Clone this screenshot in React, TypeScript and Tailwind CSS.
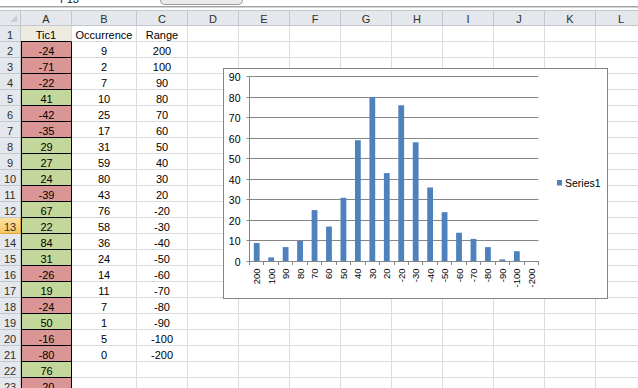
import React from 'react';

const COLS = ['A', 'B', 'C', 'D', 'E', 'F', 'G', 'H', 'I', 'J', 'K', 'L'];
const TIC = [-24, -71, -22, 41, -42, -35, 29, 27, 24, -39, 67, 22, 84, 31, -26, 19, -24, 50, -16, -80, 76, -20];
const OCC = [9, 2, 7, 10, 25, 17, 31, 59, 80, 43, 76, 58, 36, 24, 14, 11, 7, 1, 5, 0];
const RNG = [200, 100, 90, 80, 70, 60, 50, 40, 30, 20, -20, -30, -40, -50, -60, -70, -80, -90, -100, -200];

const grid = 'border-r border-b border-[#dadcdd]';
const head = 'flex items-end justify-center leading-[12px] text-[#2e2e2e]';

function Chart() {
  const left = 25.5;
  const right = 314.5;
  const base = 192.5;
  const unit = (192.5 - 7.5) / 90;
  const cw = (right - left) / RNG.length;
  const yAt = (v: number) => base - v * unit;

  return (
    <div className="absolute left-[223px] top-[68px] w-[385px] h-[231px] border border-[#868686] bg-white">
      <svg width="383" height="229" className="block font-['Liberation_Sans',Arial,sans-serif]">
        {[0, 10, 20, 30, 40, 50, 60, 70, 80, 90].map((v) => {
          const y = Math.round(yAt(v) - 0.5) + 0.5;
          return (
            <g key={v}>
              <line x1={left} x2={right} y1={y} y2={y} stroke="#868686" />
              <line x1={left - 3} x2={left} y1={y} y2={y} stroke="#868686" />
              <text x="16.5" y={y} textAnchor="end" dominantBaseline="central" fontSize="10.5" fill="#000">
                {v}
              </text>
            </g>
          );
        })}
        <line x1={left} x2={left} y1={7.5} y2={base} stroke="#868686" />
        {OCC.map((v, i) => {
          const cx = left + (i + 0.5) * cw;
          return (
            <rect key={i} x={cx - 2.9} y={yAt(v)} width="5.8" height={base - yAt(v)} fill="#4f81bd" />
          );
        })}
        <line x1={left} x2={right} y1={base} y2={base} stroke="#868686" />
        {RNG.map((_, i) => {
          const x = Math.round(left + i * cw - 0.5) + 0.5;
          return <line key={i} x1={x} x2={x} y1={base} y2={base + 3.5} stroke="#868686" />;
        })}
        <line x1={right} x2={right} y1={base} y2={base + 3.5} stroke="#868686" />
        {RNG.map((r, i) => {
          const cx = left + (i + 0.5) * cw;
          return (
            <text
              key={r}
              x={cx}
              y="199.5"
              transform={`rotate(-90 ${cx} 199.5)`}
              textAnchor="end"
              dominantBaseline="central"
              fontSize="9.5"
              fill="#000"
            >
              {r}
            </text>
          );
        })}
        <rect x="333" y="111" width="5" height="5.5" fill="#4f81bd" />
        <text x="341" y="113.8" dominantBaseline="central" fontSize="10.5" fill="#000">
          Series1
        </text>
      </svg>
    </div>
  );
}

export default function App() {
  const rows = Array.from({ length: 23 }, (_, i) => i + 1);

  return (
    <div className="relative w-[638px] h-[388px] overflow-hidden bg-white font-['Liberation_Sans',Arial,sans-serif] text-[11px] text-black">
      <div className="flex h-[6px] overflow-hidden items-start">
        <div className="w-[160px] pl-[60px]">
          <span className="block -mt-[7px] leading-[12px] text-[#222]">F13</span>
        </div>
        <div className="w-[83px] h-[5px] border border-t-0 border-[#9d9d9d] bg-[#ebebeb] rounded-b-[9px]" />
      </div>
      <div className="h-[1px] bg-[#a2a2a2]" />
      <div className="h-[1px] bg-[#d4d4d4]" />
      <div className="h-[2px] bg-white" />

      <div className="grid grid-cols-[21px_51px_65px_51px_51px_51px_51px_51px_51px_51px_51px_51px_51px] auto-rows-[16px]">
        <div className="border-t border-r border-b border-[#c3c8cf] bg-[#e4e7eb] flex items-end justify-end pr-[3px] pb-[3px]">
          <div className="w-0 h-0 border-l-[7px] border-l-transparent border-b-[7px] border-b-[#c9ccd1]" />
        </div>
        {COLS.map((c) => (
          <div key={c} className={`${head} border-t border-r border-b border-[#c3c8cf] bg-[#e4e7eb]`}>
            {c}
          </div>
        ))}

        {rows.map((r) => {
          const t = r >= 2 ? TIC[r - 2] : undefined;
          const o = r >= 2 && r <= 21 ? OCC[r - 2] : undefined;
          const g = r >= 2 && r <= 21 ? RNG[r - 2] : undefined;
          return (
            <React.Fragment key={r}>
              <div
                className={
                  r === 13
                    ? `${head} border-r border-b border-[#e2a53c] bg-gradient-to-b from-[#fde3a4] to-[#f5c65c]`
                    : `${head} border-r border-b border-[#c3c8cf] bg-[#e4e7eb]`
                }
              >
                {r}
              </div>
              {r === 1 ? (
                <div className="flex items-end justify-center leading-[12px] bg-[#eeece1] border-r border-[#dadcdd] border-b border-b-black">
                  Tic1
                </div>
              ) : (
                <div
                  className={`flex items-end justify-center leading-[12px] border-l border-r border-b border-black ${
                    (t ?? 0) < 0 ? 'bg-[#da9694]' : 'bg-[#c4d79b]'
                  }`}
                >
                  {t}
                </div>
              )}
              <div className={`flex items-end justify-center leading-[12px] ${grid}`}>
                {r === 1 ? 'Occurrence' : o}
              </div>
              <div className={`flex items-end justify-center leading-[12px] ${grid}`}>
                {r === 1 ? 'Range' : g}
              </div>
              {COLS.slice(3).map((c) => (
                <div key={c} className={grid} />
              ))}
            </React.Fragment>
          );
        })}
      </div>

      <Chart />
    </div>
  );
}
